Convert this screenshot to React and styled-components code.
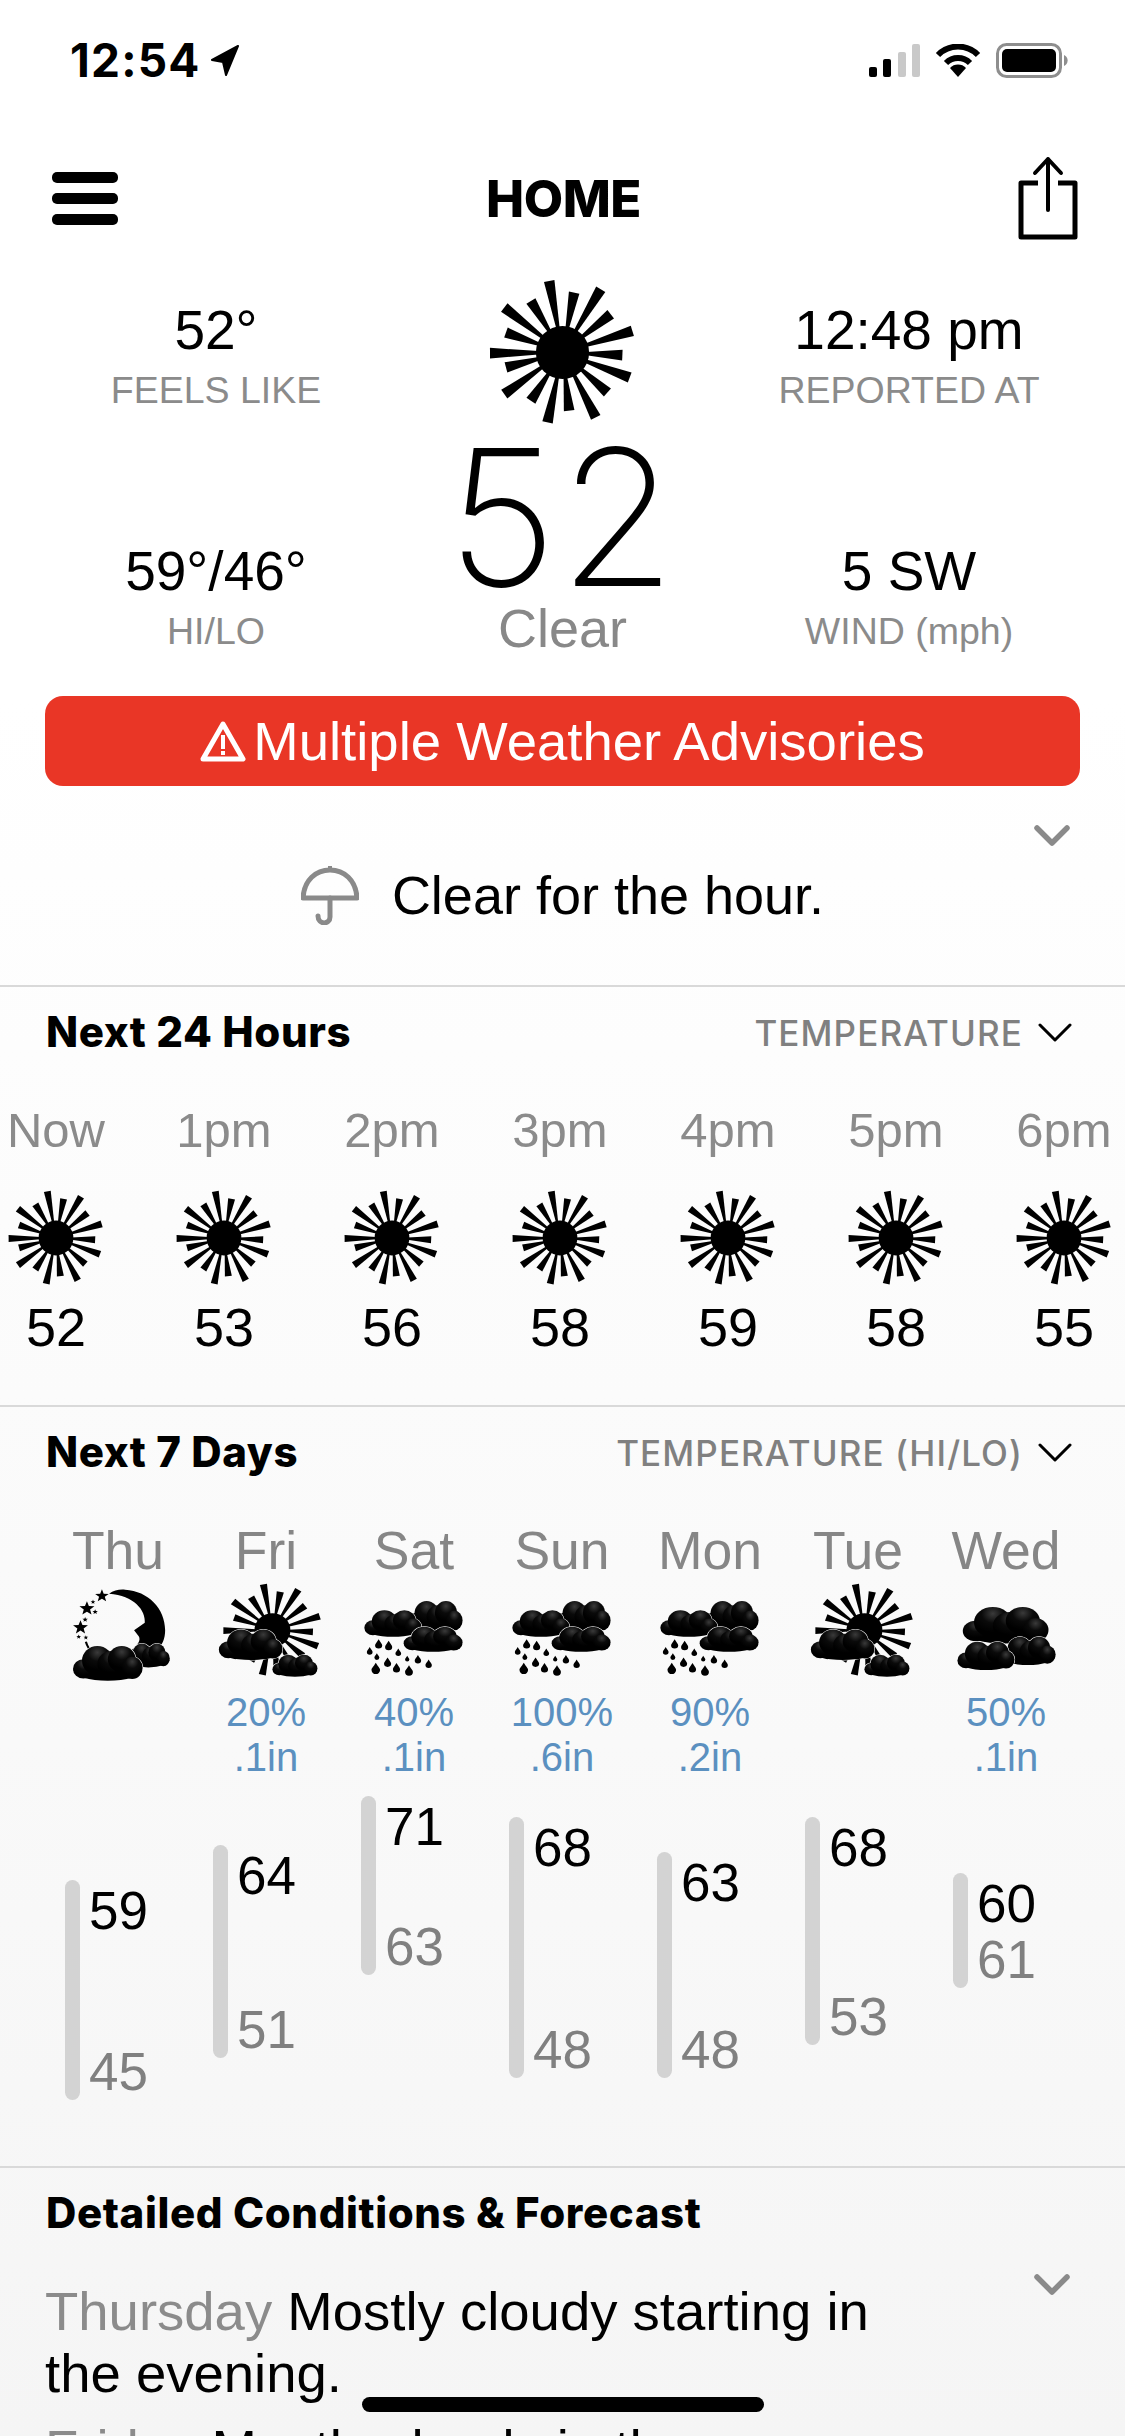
import React from "react";
import styled, { createGlobalStyle } from "styled-components";

const GlobalStyle = createGlobalStyle`
  html, body { margin: 0; padding: 0; background: #fff; }
  * { box-sizing: border-box; }
`;

const SANS = `"Liberation Sans", Arial, sans-serif`;
const UI = `Inter, "Noto Sans", sans-serif`;

const Page = styled.div`
  position: relative;
  width: 1125px;
  height: 2436px;
  overflow: hidden;
  font-family: ${SANS};
  color: #000;
  background: linear-gradient(180deg, #fff 0, #fff 700px, #f5f5f5 2436px);
`;
const HiddenDefs = styled.svg`
  position: absolute;
  width: 0;
  height: 0;
`;
const StatusBar = styled.div`
  height: 120px;
  padding: 0 57px 0 70px;
  display: flex;
  align-items: center;
  justify-content: space-between;
`;
const Clock = styled.div`
  display: flex;
  align-items: center;
  gap: 8px;
  font: 700 46px/1 ${UI};
  letter-spacing: 1.2px;
`;
const StatusIcons = styled.div`
  display: flex;
  align-items: center;
  gap: 15px;
`;
const NavBar = styled.div`
  height: 156px;
  padding: 0 47px 0 52px;
  display: grid;
  grid-template-columns: 1fr auto 1fr;
  align-items: center;
`;
const Burger = styled.div`
  width: 66px;
  display: flex;
  flex-direction: column;
  gap: 10px;
`;
const BurgerLine = styled.span`
  display: block;
  height: 11px;
  border-radius: 5px;
  background: #000;
`;
const NavTitle = styled.div`
  font: 800 51px/1 ${UI};
  letter-spacing: -0.5px;
  margin-left: -3px;
`;
const ShareIcon = styled.svg`
  justify-self: end;
`;
const Hero = styled.div`
  display: grid;
  grid-template-columns: 432px 261px 432px;
  height: 420px;
`;
const StatColumn = styled.div`
  padding-top: 24px;
  display: flex;
  flex-direction: column;
  gap: 121px;
  text-align: center;
`;
const Stat = styled.div`
  height: 120px;
`;
const StatValue = styled.div`
  font-size: 55px;
  line-height: 60px;
`;
const StatLabel = styled.div`
  font-size: 37.5px;
  line-height: 60px;
  color: #8b8b8b;
`;
const CenterColumn = styled.div`
  display: flex;
  flex-direction: column;
  align-items: center;
`;
const BigTemp = styled.div`
  margin-top: 8px;
  font: 200 190px/161px ${UI};
  letter-spacing: 2px;
  height: 161px;
`;
const Condition = styled.div`
  font-size: 54px;
  line-height: 60px;
  color: #888;
`;
const AlertBanner = styled.div`
  margin: 0 45px;
  height: 90px;
  border-radius: 18px;
  background: #e93626;
  color: #fff;
  font-size: 54.5px;
  display: flex;
  align-items: center;
  justify-content: center;
  gap: 7px;
`;
const Nowcast = styled.div`
  position: relative;
  height: 199px;
  padding-top: 79px;
  display: flex;
  align-items: flex-start;
  justify-content: center;
  gap: 33px;
  font-size: 54px;
  line-height: 60px;
`;
const ExpandChevron = styled.svg`
  position: absolute;
  right: 55px;
  top: ${(p) => p.$top}px;
`;
const Section = styled.section`
  position: relative;
  border-top: 2px solid #d9d9d9;
`;
const SectionHeader = styled.div`
  height: 90px;
  padding: 0 53px 0 46px;
  display: flex;
  align-items: center;
  justify-content: space-between;
`;
const SectionTitle = styled.h2`
  margin: 0;
  font: 800 42px/1 ${UI};
  letter-spacing: 0.6px;
`;
const Selector = styled.div`
  display: flex;
  align-items: center;
  gap: 15px;
  font: 500 35px/1 ${UI};
  letter-spacing: 1.1px;
  color: #808080;
  padding-top: 2px;
`;
const HourGrid = styled.div`
  margin: 23px 0 48px -28px;
  display: grid;
  grid-template-columns: repeat(7, 168px);
`;
const HourCell = styled.div`
  display: flex;
  flex-direction: column;
  align-items: center;
`;
const HourLabel = styled.div`
  font-size: 49px;
  line-height: 60px;
  color: #8b8b8b;
  margin-bottom: 28px;
`;
const HourTemp = styled.div`
  font-size: 54px;
  line-height: 60px;
  margin-top: 9px;
`;
const DayGrid = styled.div`
  margin-top: 24px;
  padding: 0 45px 66px 44px;
  display: grid;
  grid-template-columns: repeat(7, 148px);
`;
const DayCell = styled.div`
  display: flex;
  flex-direction: column;
`;
const DayLabel = styled.div`
  font-size: 53.5px;
  line-height: 60px;
  color: #868686;
  text-align: center;
  margin-bottom: 6px;
`;
const Precip = styled.div`
  height: 100px;
  padding-top: 10px;
  font-size: 40px;
  line-height: 45px;
  color: #5b90c0;
  text-align: center;
`;
const RangeRow = styled.div`
  margin-top: ${(p) => p.$top}px;
  height: ${(p) => p.$height}px;
  margin-left: 21px;
  display: flex;
  gap: 9px;
`;
const RangeBar = styled.div`
  width: 15px;
  border-radius: 8px;
  background: #d3d3d3;
`;
const RangeValues = styled.div`
  padding: 5px 0 3px;
  display: flex;
  flex-direction: column;
  justify-content: space-between;
  font-size: 53px;
  line-height: 51px;
`;
const LowValue = styled.div`
  color: #808080;
`;
const Forecast = styled.div`
  margin-top: 23px;
  padding: 0 45px;
  width: 930px;
  font-size: 54.5px;
  line-height: 62px;
`;
const ForecastEntry = styled.p`
  margin: 0 0 14px;
`;
const WeekDay = styled.span`
  color: #8b8b8b;
`;
const HomeIndicator = styled.div`
  position: absolute;
  left: 362px;
  top: 2397px;
  width: 402px;
  height: 15px;
  border-radius: 8px;
  background: #000;
`;
const IconFrame = styled.svg`
  display: block;
  align-self: center;
  overflow: visible;
`;

const RAYS = [
  [-40, -215], [35, -180], [115, -190], [145, -115], [210, -65], [180, 8],
  [202, 75], [135, 120], [100, 195], [20, 175], [-45, 210], [-95, 145],
  [-175, 125], [-170, 45], [-218, 2], [-170, -60], [-175, -135], [-95, -155],
];

function rayPoints([dx, dy]) {
  const len = Math.hypot(dx, dy);
  const ux = dx / len;
  const uy = dy / len;
  const nx = -uy;
  const ny = ux;
  const r0 = 72;
  const a = 5;
  const b = 16;
  return [
    [ux * r0 + nx * a, uy * r0 + ny * a],
    [dx + nx * b, dy + ny * b],
    [dx - nx * b, dy - ny * b],
    [ux * r0 - nx * a, uy * r0 - ny * a],
  ]
    .map((p) => p.map((v) => v.toFixed(1)).join(","))
    .join(" ");
}

const SunShape = ({ transform }) => (
  <g transform={transform}>
    <circle r="80" fill="#000" />
    {RAYS.map((r, i) => (
      <polygon key={i} points={rayPoints(r)} fill="#000" />
    ))}
  </g>
);

const SunIcon = ({ size }) => (
  <svg width={size} height={size} viewBox="-230 -230 460 460">
    <SunShape />
  </svg>
);

const PUFFS = [
  [0.15, 0.66, 0.15, 0.28],
  [0.35, 0.42, 0.22, 0.42],
  [0.55, 0.52, 0.2, 0.38],
  [0.7, 0.38, 0.2, 0.38],
  [0.85, 0.63, 0.15, 0.32],
];

const Cloud = ({ x, y, w, h }) => {
  const scaled = PUFFS.map(([cx, cy, rx, ry]) => ({
    cx: x + cx * w,
    cy: y + cy * h,
    rx: rx * w,
    ry: ry * h,
  }));
  const base = { cx: x + 0.5 * w, cy: y + 0.7 * h, rx: 0.49 * w, ry: 0.3 * h };
  return (
    <g>
      {[...scaled, base].map((e, i) => (
        <ellipse key={i} {...e} fill="#f9f9f9" stroke="#f9f9f9" strokeWidth="3" />
      ))}
      <ellipse {...base} fill="#000" />
      {scaled.map((e, i) => (
        <ellipse key={i} {...e} fill="url(#puff)" />
      ))}
    </g>
  );
};

const Drop = ({ x, y, r = 10 }) => (
  <path
    d={`M${x} ${y - r * 1.5} C${x + r * 0.5} ${y - r * 0.5} ${x + r} ${y - r * 0.2} ${x + r} ${y + r * 0.35} A${r} ${r} 0 0 1 ${x - r} ${y + r * 0.35} C${x - r} ${y - r * 0.2} ${x - r * 0.5} ${y - r * 0.5} ${x} ${y - r * 1.5}Z`}
    fill="#000"
  />
);

const Star = ({ x, y, r }) => {
  const pts = [];
  for (let i = 0; i < 10; i++) {
    const a = (Math.PI / 5) * i - Math.PI / 2;
    const q = i % 2 ? r * 0.42 : r;
    pts.push(`${(x + Math.cos(a) * q).toFixed(1)},${(y + Math.sin(a) * q).toFixed(1)}`);
  }
  return <polygon points={pts.join(" ")} fill="#000" />;
};

const WeatherFrame = ({ children }) => (
  <IconFrame width="100" height="93" viewBox="0 0 280 280" preserveAspectRatio="none">
    {children}
  </IconFrame>
);

const MoonIcon = () => (
  <WeatherFrame>
    <path
      d="M115 20 C128 10 145 6 160 8 C225 12 272 65 272 130 C272 155 264 175 250 190 L175 192 C195 175 205 160 198 148 L185 130 L215 108 C218 70 185 25 115 20Z"
      fill="#000"
    />
    <path d="M50 165 C54 180 62 192 72 202" stroke="#000" strokeWidth="6" fill="none" />
    <Star x={95} y={27} r={20} />
    <Star x={53} y={65} r={22} />
    <Star x={35} y={122} r={22} />
    <Star x={76} y={75} r={8} />
    <Star x={70} y={45} r={7} />
    <Star x={48} y={98} r={8} />
    <Star x={30} y={150} r={7} />
    <Star x={50} y={152} r={7} />
    <Cloud x={165} y={170} w={120} h={72} />
    <Cloud x={14} y={178} w={195} h={104} />
  </WeatherFrame>
);

const SunCloudIcon = () => (
  <WeatherFrame>
    <SunShape transform="translate(158 130) scale(0.63 0.64)" />
    <Cloud x={8} y={128} w={178} h={92} />
    <Cloud x={158} y={204} w={126} h={66} />
  </WeatherFrame>
);

const DROPS = [
  [41, 172, 10], [69, 177, 10], [16, 193, 8], [36, 210, 7], [96, 197, 8],
  [121, 216, 6], [151, 218, 9], [181, 232, 9], [33, 246, 12], [66, 227, 10],
  [91, 244, 10], [126, 252, 11],
];

const RainIcon = () => (
  <WeatherFrame>
    {DROPS.map(([x, y, r], i) => (
      <Drop key={i} x={x} y={y} r={r} />
    ))}
    <Cloud x={121} y={42} w={155} h={93} />
    <Cloud x={1} y={70} w={160} h={80} />
    <Cloud x={111} y={120} w={165} h={75} />
  </WeatherFrame>
);

const CloudIcon = () => (
  <WeatherFrame>
    <Cloud x={19} y={60} w={240} h={110} />
    <Cloud x={124} y={150} w={155} h={85} />
    <Cloud x={4} y={165} w={160} h={85} />
  </WeatherFrame>
);

const Chevron = ({ top }) => (
  <ExpandChevron $top={top} width="36" height="22" viewBox="0 0 36 22">
    <path d="M3 3 L18 18 L33 3" fill="none" stroke="#8a8a8a" strokeWidth="5.5" strokeLinecap="round" strokeLinejoin="round" />
  </ExpandChevron>
);

const SelectorChevron = () => (
  <svg width="34" height="20" viewBox="0 0 34 20">
    <path d="M2 2 L17 17 L32 2" fill="none" stroke="#000" strokeWidth="3" strokeLinecap="round" strokeLinejoin="round" />
  </svg>
);

const HOURS = [
  ["Now", 52], ["1pm", 53], ["2pm", 56], ["3pm", 58], ["4pm", 59], ["5pm", 58], ["6pm", 55],
];

const DAYS = [
  { day: "Thu", Icon: MoonIcon, top: 100, height: 220, hi: 59, lo: 45 },
  { day: "Fri", Icon: SunCloudIcon, pct: "20%", amt: ".1in", top: 65, height: 213, hi: 64, lo: 51 },
  { day: "Sat", Icon: RainIcon, pct: "40%", amt: ".1in", top: 16, height: 179, hi: 71, lo: 63 },
  { day: "Sun", Icon: RainIcon, pct: "100%", amt: ".6in", top: 37, height: 261, hi: 68, lo: 48 },
  { day: "Mon", Icon: RainIcon, pct: "90%", amt: ".2in", top: 72, height: 226, hi: 63, lo: 48 },
  { day: "Tue", Icon: SunCloudIcon, top: 37, height: 228, hi: 68, lo: 53 },
  { day: "Wed", Icon: CloudIcon, pct: "50%", amt: ".1in", top: 93, height: 115, hi: 60, lo: 61 },
];

export default function App() {
  return (
    <Page>
      <GlobalStyle />
      <HiddenDefs>
        <defs>
          <radialGradient id="puff" cx="0.5" cy="0.22" r="0.6">
            <stop offset="0" stopColor="#3a3a3a" />
            <stop offset="0.5" stopColor="#0a0a0a" />
            <stop offset="1" stopColor="#000" />
          </radialGradient>
        </defs>
      </HiddenDefs>

      <StatusBar>
        <Clock>
          12:54
          <svg width="30" height="31" viewBox="0 0 30 31">
            <path d="M29 1 L3 15 L14 17 L17 30 Z" fill="#000" stroke="#000" strokeWidth="2" strokeLinejoin="round" />
          </svg>
        </Clock>
        <StatusIcons>
          <svg width="51" height="33" viewBox="0 0 51 33">
            <rect x="0" y="23" width="8" height="10" rx="2" fill="#000" />
            <rect x="14" y="15" width="8" height="18" rx="2" fill="#000" />
            <rect x="29" y="8" width="8" height="25" rx="2" fill="#c9c9c9" />
            <rect x="43" y="0" width="8" height="33" rx="2" fill="#c9c9c9" />
          </svg>
          <svg width="46" height="33" viewBox="0 0 46 33">
            <path d="M3 11 A28 28 0 0 1 43 11" fill="none" stroke="#000" strokeWidth="6" />
            <path d="M11 19 A17 17 0 0 1 35 19" fill="none" stroke="#000" strokeWidth="6" />
            <path d="M23 33 L15 24 A11 11 0 0 1 31 24 Z" fill="#000" />
          </svg>
          <svg width="72" height="35" viewBox="0 0 72 35">
            <rect x="1.5" y="1.5" width="63" height="32" rx="9" fill="none" stroke="#8e8e8e" strokeWidth="3" />
            <rect x="6" y="6" width="54" height="23" rx="5" fill="#000" />
            <path d="M68 12 A6 6 0 0 1 68 23 Z" fill="#8e8e8e" />
          </svg>
        </StatusIcons>
      </StatusBar>

      <NavBar>
        <Burger>
          <BurgerLine />
          <BurgerLine />
          <BurgerLine />
        </Burger>
        <NavTitle>HOME</NavTitle>
        <ShareIcon width="60" height="84" viewBox="0 0 60 84">
          <path d="M20 27 L3 27 L3 81 L57 81 L57 27 L40 27" fill="none" stroke="#000" strokeWidth="5" strokeLinejoin="round" />
          <path d="M30 54 L30 3 M17 17 L30 3 L43 17" fill="none" stroke="#000" strokeWidth="4" strokeLinecap="round" strokeLinejoin="round" />
        </ShareIcon>
      </NavBar>

      <Hero>
        <StatColumn>
          <Stat>
            <StatValue>52°</StatValue>
            <StatLabel>FEELS LIKE</StatLabel>
          </Stat>
          <Stat>
            <StatValue>59°/46°</StatValue>
            <StatLabel>HI/LO</StatLabel>
          </Stat>
        </StatColumn>
        <CenterColumn>
          <SunIcon size={153} />
          <BigTemp>52</BigTemp>
          <Condition>Clear</Condition>
        </CenterColumn>
        <StatColumn>
          <Stat>
            <StatValue>12:48 pm</StatValue>
            <StatLabel>REPORTED AT</StatLabel>
          </Stat>
          <Stat>
            <StatValue>5 SW</StatValue>
            <StatLabel>WIND (mph)</StatLabel>
          </Stat>
        </StatColumn>
      </Hero>

      <AlertBanner>
        <svg width="46" height="42" viewBox="0 0 46 42">
          <path d="M23 4 L43 39 L3 39 Z" fill="none" stroke="#fff" strokeWidth="5" strokeLinejoin="round" />
          <path d="M23 15 L23 29" stroke="#fff" strokeWidth="4" />
          <rect x="21" y="31" width="4" height="4" fill="#fff" />
        </svg>
        Multiple Weather Advisories
      </AlertBanner>

      <Nowcast>
        <Chevron top={39} />
        <svg width="58" height="60" viewBox="0 0 58 60">
          <path d="M29 1 L29 6" stroke="#8a8a8a" strokeWidth="4" />
          <path d="M2 33 C3 15 15 5 29 5 C43 5 55 15 56 33 Z" fill="none" stroke="#8a8a8a" strokeWidth="5" strokeLinejoin="round" />
          <path d="M29 33 L29 52 C29 60 17 60 17 51" fill="none" stroke="#8a8a8a" strokeWidth="5" strokeLinecap="round" />
        </svg>
        Clear for the hour.
      </Nowcast>

      <Section>
        <SectionHeader>
          <SectionTitle>Next 24 Hours</SectionTitle>
          <Selector>
            TEMPERATURE
            <SelectorChevron />
          </Selector>
        </SectionHeader>
        <HourGrid>
          {HOURS.map(([label, temp]) => (
            <HourCell key={label}>
              <HourLabel>{label}</HourLabel>
              <SunIcon size={100} />
              <HourTemp>{temp}</HourTemp>
            </HourCell>
          ))}
        </HourGrid>
      </Section>

      <Section>
        <SectionHeader>
          <SectionTitle>Next 7 Days</SectionTitle>
          <Selector>
            TEMPERATURE (HI/LO)
            <SelectorChevron />
          </Selector>
        </SectionHeader>
        <DayGrid>
          {DAYS.map(({ day, Icon, pct, amt, top, height, hi, lo }) => (
            <DayCell key={day}>
              <DayLabel>{day}</DayLabel>
              <Icon />
              <Precip>
                {pct}
                {pct && <br />}
                {amt}
              </Precip>
              <RangeRow $top={top} $height={height}>
                <RangeBar />
                <RangeValues>
                  <div>{hi}</div>
                  <LowValue>{lo}</LowValue>
                </RangeValues>
              </RangeRow>
            </DayCell>
          ))}
        </DayGrid>
      </Section>

      <Section>
        <SectionHeader>
          <SectionTitle>Detailed Conditions &amp; Forecast</SectionTitle>
        </SectionHeader>
        <Chevron top={106} />
        <Forecast>
          <ForecastEntry>
            <WeekDay>Thursday</WeekDay> Mostly cloudy starting in the evening.
          </ForecastEntry>
          <ForecastEntry>
            <WeekDay>Friday</WeekDay> Mostly cloudy in the morning and
          </ForecastEntry>
        </Forecast>
      </Section>

      <HomeIndicator />
    </Page>
  );
}
